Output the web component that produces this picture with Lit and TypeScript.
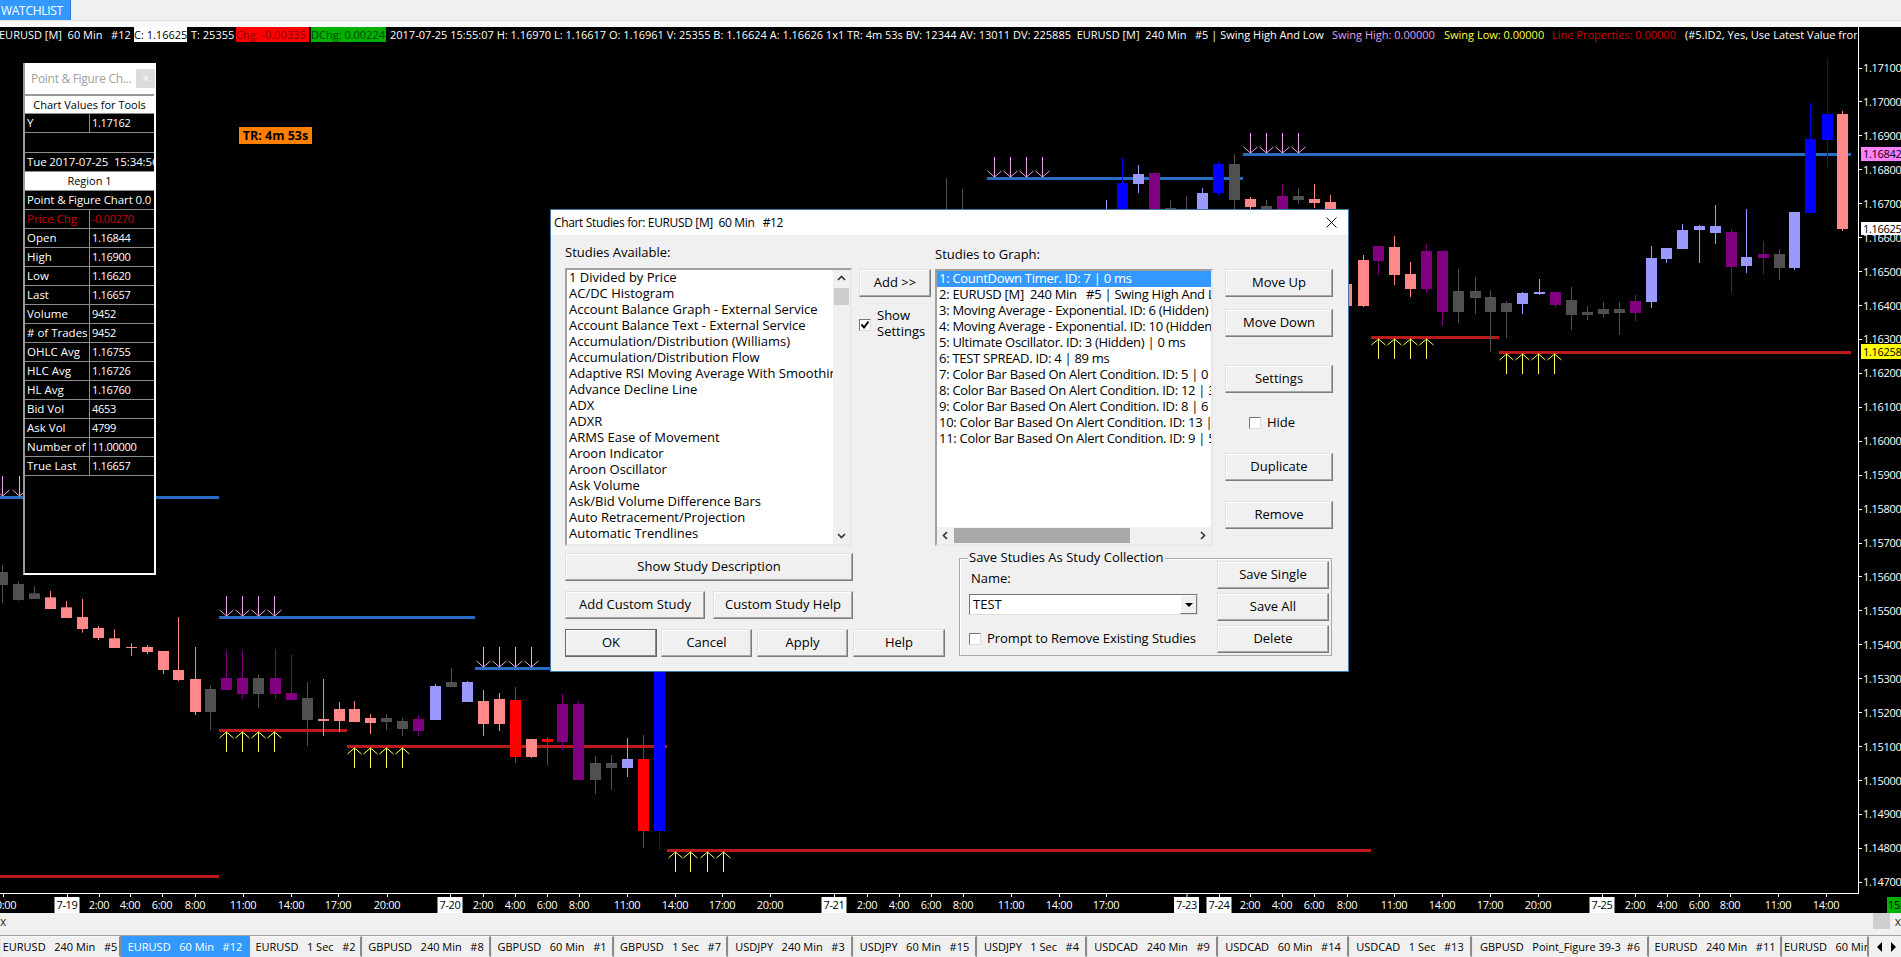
import { LitElement, html, css, svg } from "lit";
import { customElement } from "lit/decorators.js";
import { styleMap } from "lit/directives/style-map.js";

const C: Record<string, string> = { p: "#ff8888", g: "#505050", v: "#800080", b: "#9999ff", r: "#ff0000", u: "#0000ff" };
type K = [number, number, number, number, number, string];

// left part: x and y read from the lower-left crop
const z9: K[] = ([
  [42,5,62,12,60,"g"],[79,18,57,40,57,"g"],[116,33,87,52,87,"p"],[153,63,114,82,114,"p"],[190,57,158,111,147,"p"],
  [227,138,180,144,174,"p"],[264,148,204,175,204,"p"],[301,190,228,201,204,"p"],[338,195,222,201,216,"p"],[375,213,282,213,270,"p"],
  [411,111,303,270,300,"p"],[449,201,405,297,396,"p"],[485,316,450,327,396,"g"],[522,213,330,294,330,"v"],[559,213,357,294,342,"v"],
  [596,285,384,294,342,"g"],[633,207,357,294,342,"v"],[670,225,360,339,360,"v"],[707,306,498,354,420,"g"],[744,297,468,417,423,"p"],
  [781,366,456,387,423,"p"],[817,363,426,387,426,"p"],[854,402,462,414,429,"p"],[891,402,450,414,426,"g"],[928,414,468,423,447,"g"],
  [965,405,468,417,453,"v"],[1002,312,420,318,420,"b"],[1039,264,321,306,321,"g"],[1076,303,366,306,366,"b"],[1113,330,468,363,432,"p"],
  [1150,339,453,357,432,"p"],[1187,321,549,360,531,"r"],[1224,477,534,477,531,"p"],[1261,471,555,477,486,"r"],[1297,342,510,372,486,"v"],
  [1334,363,600,372,600,"v"],[1371,528,642,549,600,"g"],[1408,525,630,549,564,"g"],[1445,474,591,537,564,"b"],[1482,465,804,537,753,"r"],
  [1519,60,810,60,753,"u"],
] as K[]).map(([z, a, b, c, d, k]) => [z / 2.306, 580 + a / 3, 580 + b / 3, 580 + c / 3, 580 + d / 3, k] as K);

const candles: K[] = [
  [2, 565, 603, 572, 585, "g"],
  ...z9,
  [946,178,300,260,300,"g"],[962,189,300,260,300,"g"],[1106,200,300,260,300,"b"],[1122,158,300,183,300,"u"],
  [1138,165,193,174,184,"b"],[1154,172,300,173,300,"v"],[1170,200,300,208,300,"g"],[1186,196,300,260,300,"g"],
  [1202,188,300,193,300,"b"],[1218,162,196,164,193,"u"],[1234,154,300,164,200,"g"],[1250,197,209,199,207,"p"],
  [1266,200,300,206,300,"g"],[1282,184,300,196,300,"v"],[1298,188,204,196,200,"g"],[1314,184,208,199,203,"p"],
  [1330,195,300,202,300,"p"],[1346,284,306,284,306,"p"],
  [1362.5,255,307,260,306,"p"],[1378,246,275,246,261,"v"],[1394,236,285,247,275,"p"],[1410,262,297,274,289,"p"],
  [1426,244,293,251,289,"v"],[1442,250,326,251,312,"v"],[1458,269,323,291,312,"g"],[1474.5,277,314,291,298,"g"],
  [1490,290,352,297,312,"g"],[1506,301,338,303,312,"g"],[1522,292,314,293,304,"b"],[1538.5,279,295,292,294,"b"],
  [1554.7,292,307,292,305,"v"],[1570.8,287,330,300,315,"g"],[1586.5,306,320,312,315,"g"],[1602.6,302,317,309,314,"g"],
  [1618.7,302,335,309,313,"g"],[1634.8,295,321,301,313,"v"],[1650.5,246,308,258,302,"b"],[1666.3,248,263,248,259,"b"],
  [1682.4,224,249,230,249,"b"],[1698.5,225,263,226,230,"b"],[1714.6,205,244,226,233,"b"],[1730.7,229,293,232,267,"v"],
  [1746.4,209,273,257,266,"b"],[1762.5,241,274,254,258,"v"],[1778.6,249,280,254,268,"g"],[1794.4,212,270,212,268,"b"],
  [1810,103,213,139,213,"u"],[1826.5,59,167,114,140,"u"],[1842.4,111,231,114,229,"p"],
];

// swing lines: x1, x2, y, arrow xs, arrow far end
type L = [number, number, number, number[], number];
const blue: L[] = [
  [0, 219, 497, [2, 19], 476],
  [219, 475, 617, [226, 242, 258, 274], 596],
  [475, 552, 668, [483, 499, 515, 531], 647],
  [987, 1243, 178, [994, 1010, 1026, 1042], 157],
  [1243, 1851, 154, [1250, 1266, 1282, 1298], 133],
];
const red: L[] = [
  [0, 219, 876, [], 0],
  [219, 347, 730, [226, 242, 258, 274], 752],
  [347, 667, 746, [354, 370, 386, 402], 768],
  [667, 1371, 850, [675, 690, 707, 723], 872],
  [1371, 1499, 337, [1378, 1394, 1410, 1426], 359],
  [1499, 1851, 352, [1506, 1522, 1538, 1554], 374],
];

const times: [number, string][] = [
  [3,"20:00"],[99,"2:00"],[130,"4:00"],[162,"6:00"],[195,"8:00"],[243,"11:00"],[291,"14:00"],[338,"17:00"],[387,"20:00"],
  [483,"2:00"],[515,"4:00"],[547,"6:00"],[579,"8:00"],[627,"11:00"],[675,"14:00"],[722,"17:00"],[770,"20:00"],
  [867,"2:00"],[899,"4:00"],[931,"6:00"],[963,"8:00"],[1011,"11:00"],[1059,"14:00"],[1106,"17:00"],
  [1250,"2:00"],[1282,"4:00"],[1314,"6:00"],[1347,"8:00"],[1394,"11:00"],[1442,"14:00"],[1490,"17:00"],[1538,"20:00"],
  [1635,"2:00"],[1667,"4:00"],[1699,"6:00"],[1730,"8:00"],[1778,"11:00"],[1826,"14:00"],
];
const dates: [number, string][] = [[67,"7-19"],[450,"7-20"],[834,"7-21"],[1186.5,"7-23"],[1219,"7-24"],[1602,"7-25"]];
const prices = ["1.17100","1.17000","1.16900","1.16800","1.16700","1.16600","1.16500","1.16400","1.16300","1.16200","1.16100","1.16000","1.15900","1.15800","1.15700","1.15600","1.15500","1.15400","1.15300","1.15200","1.15100","1.15000","1.14900","1.14800","1.14700"];
const priceTags: [number, number, string, string][] = [[147, 14, "1.16842", "#ff80ff"], [222, 13, "1.16625", "#ffffff"], [344, 15, "1.16258", "#ffff00"]];

const tabs: [string, number, boolean?][] = [
  ["EURUSD   240 Min   #5", 121],["EURUSD   60 Min   #12", 129, true],["EURUSD   1 Sec   #2", 112],["GBPUSD   240 Min   #8", 129],
  ["GBPUSD   60 Min   #1", 123],["GBPUSD   1 Sec   #7", 114],["USDJPY   240 Min   #3", 125],["USDJPY   60 Min   #15", 124],
  ["USDJPY   1 Sec   #4", 110],["USDCAD   240 Min   #9", 131],["USDCAD   60 Min   #14", 131],["USDCAD   1 Sec   #13", 123],
  ["GBPUSD   Point_Figure 39-3  #6", 177],["EURUSD   240 Min   #11", 133],["EURUSD   60 Min   #16", 87],
];

const available = ["1 Divided by Price","AC/DC Histogram","Account Balance Graph - External Service","Account Balance Text - External Service","Accumulation/Distribution (Williams)","Accumulation/Distribution Flow","Adaptive RSI Moving Average With Smoothing","Advance Decline Line","ADX","ADXR","ARMS Ease of Movement","Aroon Indicator","Aroon Oscillator","Ask Volume","Ask/Bid Volume Difference Bars","Auto Retracement/Projection","Automatic Trendlines","Average Daily Range"];
const graphed = ["1: CountDown Timer. ID: 7 | 0 ms","2: EURUSD [M]  240 Min   #5 | Swing High And Low","3: Moving Average - Exponential. ID: 6 (Hidden) | 0 ms","4: Moving Average - Exponential. ID: 10 (Hidden) | 0 ms","5: Ultimate Oscillator. ID: 3 (Hidden) | 0 ms","6: TEST SPREAD. ID: 4 | 89 ms","7: Color Bar Based On Alert Condition. ID: 5 | 0 ms","8: Color Bar Based On Alert Condition. ID: 12 | 3 ms","9: Color Bar Based On Alert Condition. ID: 8 | 6 ms","10: Color Bar Based On Alert Condition. ID: 13 | 4 ms","11: Color Bar Based On Alert Condition. ID: 9 | 5 ms"];
const values: [string, string, string?][] = [
  ["Price Chg","-0.00270","neg"],["Open","1.16844"],["High","1.16900"],["Low","1.16620"],["Last","1.16657"],["Volume","9452"],["# of Trades","9452"],
  ["OHLC Avg","1.16755"],["HLC Avg","1.16726"],["HL Avg","1.16760"],["Bid Vol","4653"],["Ask Vol","4799"],["Number of Bars","11.00000"],["True Last","1.16657"],
];

const chev = (d: string) => html`<svg class="chev" width="9" height="9" viewBox="0 0 9 9"><path d=${d} fill="none" stroke="#333" stroke-width="1.6"/></svg>`;
const check = (on: boolean) => html`<span class="cb">${on ? html`<svg width="10" height="10" viewBox="0 0 10 10"><path d="M1.5 4.5 L4 7.5 L8.5 1.5" fill="none" stroke="#000" stroke-width="2"/></svg>` : ""}</span>`;

@customElement("app-root")
export class AppRoot extends LitElement {
  static styles = css`
    :host { display: flex; flex-direction: column; width: 1901px; height: 957px; overflow: hidden; background: #f0f0f0;
      font-family: "Open Sans", "Liberation Sans", sans-serif; font-size: 11px; color: #000; }
    * { box-sizing: border-box; }
    .top { height: 20px; background: #f0f0f0; display: flex; }
    .wl { width: 71px; height: 21px; background: #3399ff; color: #fff; font-size: 12px; letter-spacing: -0.3px; line-height: 21px; padding-left: 1px; border-right: 1px solid #2a7fd4; }
    .topline { height: 7px; background: #f9f9f9; border-top: 1px solid #dcdcdc; }
    .chart { position: relative; height: 886px; background: #000; }
    .plot { position: absolute; left: 0; top: 0; display: block; }
    .plot text { font-family: "Open Sans", "Liberation Sans", sans-serif; font-size: 11px; letter-spacing: -0.3px; }
    .status { position: relative; width: 1857px; height: 15px; line-height: 15px; display: grid; color: #fff; white-space: pre;
      grid-template-columns: 134px 53px 49px 73px 2px 75px 946px 112px 108px 133px 1fr; }
    .status > span { overflow: hidden; }
    .first { text-indent: -1px; }
    .cbox { background: #fff; color: #000; }
    .tcell { padding-left: 4px; }
    .chg { background: #ff0000; color: #8a0000; }
    .dchg { background: #00b000; color: #004a00; }
    .main { padding-left: 4px; }
    .sh { color: #e0a0f0; }
    .sl { color: #ffff40; }
    .lp { color: #d00000; }
    .badge { position: absolute; left: 239px; top: 100px; width: 73px; height: 17px; background: #ff8000; color: #000; font-weight: 700;
      font-size: 12.5px; line-height: 17px; text-align: center; }
    .panel { position: absolute; left: 23px; top: 36px; width: 133px; height: 512px; background: #000; color: #fff; display: flex; flex-direction: column;
      border-right: 2px solid #fff; border-bottom: 2px solid #fff; border-left: 2px solid #9a9a9a; }
    .ptitle { height: 31px; background: #fff; color: #a0a0a0; font-size: 12px; letter-spacing: -0.3px; display: flex; align-items: center; justify-content: space-between; padding: 0 0 0 6px; white-space: nowrap; }
    .px { width: 19px; height: 19px; background: #dcdcdc; color: #fff; line-height: 19px; text-align: center; font-size: 12px; margin-right: -1px; }
    .prow { height: 19px; line-height: 18px; border-bottom: 1px solid #8c8c8c; display: flex; white-space: pre; overflow: hidden; }
    .prow.firstrow { height: 20px; border-top: 2px solid #9a9a9a; }
    .prow.w { background: #fff; color: #000; justify-content: center; }
    .prow.blank { height: 20px; }
    .prow .a { width: 65px; flex: none; padding-left: 2px; border-right: 1px solid #8c8c8c; overflow: hidden; font-size: 11.5px; }
    .prow .b { padding-left: 2px; flex: 1; overflow: hidden; letter-spacing: -0.3px; }
    .prow .full { padding-left: 2px; overflow: hidden; font-size: 11.5px; letter-spacing: -0.12px; }
    .prow.neg { color: #d00000; }

    .dlg { position: absolute; left: 550px; top: 182px; width: 799px; height: 463px; background: #f0f0f0; border: 1px solid #3f78a8;
      display: flex; flex-direction: column; font-size: 13px; }
    .dt { height: 25px; flex: none; background: #fff; display: flex; align-items: center; justify-content: space-between; padding: 0 11px 0 3px; white-space: pre; font-size: 12px; letter-spacing: -0.35px; }
    .dbody { padding-left: 14px; display: flex; flex-direction: column; }
    .toprow { display: flex; height: 311px; }
    .cola { width: 287px; }
    .colb { width: 72px; margin-left: 7px; padding-top: 34px; }
    .colc { width: 278px; margin-left: 4px; }
    .cold { width: 108px; margin-left: 12px; padding-top: 34px; display: flex; flex-direction: column; }
    .lab { height: 33px; line-height: 16px; padding-top: 9px; }
    .colc .lab { height: 34px; padding-top: 11px; }
    .list { display: flex; background: #fff; height: 278px; overflow: hidden; border-style: solid; border-width: 2px 2px 2px 2px; border-color: #a0a0a0 #e8e8e8 #e8e8e8 #a0a0a0; }
    .colc .list { height: 277px; flex-direction: column; letter-spacing: -0.28px; }
    .items { flex: 1; min-width: 0; min-height: 0; overflow: hidden; }
    .item { height: 16px; line-height: 15px; padding-left: 2px; white-space: pre; overflow: hidden; }
    .item.sel { background: #3399ff; color: #fff; }
    .vs { width: 17px; flex: none; background: #f0f0f0; display: flex; flex-direction: column; align-items: center; }
    .vs .thumb { width: 15px; height: 17px; background: #cdcdcd; margin-top: 1px; }
    .vs .sp { flex: 1; }
    .hs { height: 17px; flex: none; background: #f0f0f0; display: flex; align-items: center; }
    .hs .thumb { width: 176px; height: 15px; background: #a8a8a8; }
    .hs .sp { flex: 1; }
    .chev { flex: none; margin: 4px; display: block; }
    .btn { display: flex; align-items: center; justify-content: center; height: 28px; flex: none; background: #f0f0f0; white-space: nowrap; padding-bottom: 2px;
      border: 1px solid; border-color: #e0e0e0 #7c7c7c #7c7c7c #e0e0e0; box-shadow: inset -1px -1px 0 #a8a8a8, inset 1px 1px 0 #fff; }
    .btn.def { border-color: #666; box-shadow: inset -1px -1px 0 #8a8a8a, inset 1px 1px 0 #fff; }
    .chk { display: flex; gap: 6px; align-items: center; }
    .chk > span:last-child { position: relative; top: -1px; }
    .cb { width: 12px; height: 12px; flex: none; background: #fff; border: 1px solid; border-color: #777 #ddd #ddd #777; display: flex; align-items: center; justify-content: center; }
    .cb svg { display: block; }
    .show { margin-top: 11px; align-items: flex-start; line-height: 16px; }
    .show .cb { margin-top: 11px; }
    .m12 { margin-top: 12px; }
    .m28 { margin-top: 28px; }
    .m24 { margin-top: 24px; }
    .m20 { margin-top: 20px; }
    .hide { padding-left: 24px; height: 12px; }
    .bottom { display: flex; margin-top: 7px; }
    .bl { width: 380px; display: flex; flex-direction: column; }
    .bl .w288 { width: 288px; }
    .brow { display: flex; margin-top: 10px; }
    .w140 { width: 140px; }
    .g8 { margin-left: 8px; }
    .w92 { width: 92px; }
    .w91 { width: 91px; }
    .g4 { margin-left: 4px; }
    .g5 { margin-left: 5px; }
    .grp { position: relative; width: 373px; height: 98px; margin: 5px 0 0 14px; border: 1px solid #a8a8a8; box-shadow: inset 1px 1px 0 #fff; display: flex; justify-content: space-between; padding: 2px 2px 0 9px; }
    .leg { position: absolute; left: 8px; top: -10px; background: #f0f0f0; padding: 0 1px; line-height: 16px; white-space: nowrap; }
    .gl { width: 229px; padding-top: 9px; }
    .name { line-height: 16px; margin-left: 2px; }
    .combo { margin-top: 8px; height: 21px; display: flex; background: #fff; border: 1px solid; border-color: #777 #ddd #ddd #777; padding-left: 3px; line-height: 18px; justify-content: space-between; }
    .arrow { width: 17px; background: #f0f0f0; border: 1px solid; border-color: #fff #777 #777 #fff; display: flex; align-items: center; justify-content: center; }
    .arrow i { width: 0; height: 0; border-style: solid; border-width: 4px 4px 0 4px; border-color: #000 transparent transparent transparent; }
    .prompt { margin-top: 18px; white-space: nowrap; height: 12px; letter-spacing: -0.08px; }
    .gr { width: 112px; display: flex; flex-direction: column; gap: 4px; }

    .strip { height: 22px; background: #f0f0f0; display: flex; justify-content: space-between; line-height: 18px; color: #333; }
    .sx { padding-left: 0; font-size: 12px; }
    .sr { display: flex; }
    .sq { width: 17px; height: 16px; background: #cfcfcf; }
    .sr .x2 { width: 11px; text-align: right; font-size: 12px; }
    .tabs { height: 22px; display: flex; border-top: 1px solid #a0a0a0; background: #f0f0f0; overflow: hidden; }
    .tab { flex: none; overflow: hidden; white-space: pre; text-align: center; line-height: 19px; padding: 0 1px;
      border: 1px solid; border-color: #f8f8f8 #8a8a8a #f0f0f0 #e8e8e8; border-right-width: 2px; }
    .tab.on { background: #3399ff; color: #fff; border-color: #3399ff; margin-top: -1px; height: 23px; line-height: 21px; }
    .nav { flex: 1; display: flex; align-items: center; justify-content: space-around; padding-left: 3px; }
    .nav i { width: 0; height: 0; border-style: solid; border-width: 5px 0; border-color: transparent #000; }
    .nav i.l { border-right-width: 5px; border-left-width: 0; }
    .nav i.r { border-left-width: 5px; border-right-width: 0; }
  `;

  private plot() {
    return html`<svg class="plot" width="1901" height="886" viewBox="0 27 1901 886">
      ${[...blue.map((l) => this.line(l, "#2a6cc4", "#e8a4e8", -1)), ...red.map((l) => this.line(l, "#bb1a1a", "#ffff66", 1))]}
      ${candles.map(([x, wt, wb, bt, bb, k]) => {
        const cx = Math.round(x);
        return svg`<rect x=${cx} y=${wt} width="1" height=${wb - wt} fill=${C[k]}/><rect x=${cx - 5} y=${bt} width="11" height=${bb - bt} fill=${C[k]}/>`;
      })}
      <rect x="1858" y="27" width="1" height="867" fill="#fff"/>
      <rect x="0" y="893" width="1859" height="1" fill="#fff"/>
      ${prices.map((p, i) => {
        const y = 67.5 + i * 33.93;
        return svg`<rect x="1858" y=${Math.round(y)} width="4" height="1" fill="#fff"/><text x="1863" y=${y + 4.5} fill="#fff">${p}</text>`;
      })}
      ${priceTags.map(([y, h, t, bg]) => svg`<rect x="1861" y=${y} width="40" height=${h} fill=${bg}/><text x="1863" y=${y + h / 2 + 4} fill="#000">${t}</text>`)}
      ${times.map(([x, t]) => svg`<rect x=${x} y="893" width="1" height="4" fill="#fff"/><text x=${x} y="909" text-anchor="middle" fill="#fff">${t}</text>`)}
      ${dates.map(([x, t]) => svg`<rect x=${x} y="893" width="1" height="4" fill="#fff"/><rect x=${x - 12.5} y="897" width="25" height="16" fill="#fff"/><text x=${x} y="909" text-anchor="middle" fill="#000">${t}</text>`)}
      <rect x="1887" y="897" width="14" height="16" fill="#00b000"/><text x="1888" y="909" fill="#000">15:55:07</text>
    </svg>`;
  }

  private line([x1, x2, y, xs, end]: L, col: string, acol: string, dir: number) {
    const tip = dir < 0 ? y - 1 : y + 2;
    const wing = tip + dir * 6;
    return svg`<rect x=${x1} y=${y - 1} width=${x2 - x1} height="3" fill=${col}/>
      ${xs.map((x) => svg`<path d="M${x + 0.5} ${end} L${x + 0.5} ${tip} M${x - 6.5} ${wing} L${x + 0.5} ${tip} L${x + 7.5} ${wing}" fill="none" stroke=${acol} stroke-width="1"/>`)}`;
  }

  render() {
    return html`
      <div class="top"><div class="wl">WATCHLIST</div></div>
      <div class="topline"></div>
      <div class="chart">
        ${this.plot()}
        <div class="status">
          <span class="first">EURUSD [M]  60 Min   #12</span>
          <span class="cbox">C: 1.16625</span>
          <span class="tcell">T: 25355</span>
          <span class="chg">Chg: -0.00335</span>
          <span></span>
          <span class="dchg">DChg: 0.00224</span>
          <span class="main">2017-07-25 15:55:07 H: 1.16970 L: 1.16617 O: 1.16961 V: 25355 B: 1.16624 A: 1.16626 1x1 TR: 4m 53s BV: 12344 AV: 13011 DV: 225885  EURUSD [M]  240 Min   #5 | Swing High And Low</span>
          <span class="sh">Swing High: 0.00000</span>
          <span class="sl">Swing Low: 0.00000</span>
          <span class="lp">Line Properties: 0.00000</span>
          <span>(#5.ID2, Yes, Use Latest Value from Reference)</span>
        </div>
        <div class="badge">TR: 4m 53s</div>
        <div class="panel">
          <div class="ptitle"><span>Point &amp; Figure Ch...</span><span class="px">×</span></div>
          <div class="prow w firstrow">Chart Values for Tools</div>
          <div class="prow"><span class="a">Y</span><span class="b">1.17162</span></div>
          <div class="prow blank"></div>
          <div class="prow"><span class="full">Tue 2017-07-25  15:34:56</span></div>
          <div class="prow w">Region 1</div>
          <div class="prow"><span class="full">Point &amp; Figure Chart 0.0</span></div>
          ${values.map(([a, b, c]) => html`<div class="prow ${c ?? ""}"><span class="a">${a}</span><span class="b">${b}</span></div>`)}
        </div>
        <div class="dlg">
          <div class="dt"><span>Chart Studies for: EURUSD [M]  60 Min   #12</span>
            <svg width="11" height="11" viewBox="0 0 11 11"><path d="M0.5 0.5 L10.5 10.5 M10.5 0.5 L0.5 10.5" stroke="#111" stroke-width="1"/></svg></div>
          <div class="dbody">
            <div class="toprow">
              <div class="cola">
                <div class="lab">Studies Available:</div>
                <div class="list">
                  <div class="items">${available.map((s) => html`<div class="item">${s}</div>`)}</div>
                  <div class="vs">${chev("M1 6 L4.5 2.5 L8 6")}<div class="thumb"></div><div class="sp"></div>${chev("M1 3 L4.5 6.5 L8 3")}</div>
                </div>
              </div>
              <div class="colb">
                <div class="btn">Add &gt;&gt;</div>
                <div class="chk show">${check(true)}<span>Show<br />Settings</span></div>
              </div>
              <div class="colc">
                <div class="lab">Studies to Graph:</div>
                <div class="list">
                  <div class="items">${graphed.map((s, i) => html`<div class="item ${i === 0 ? "sel" : ""}">${s}</div>`)}</div>
                  <div class="hs">${chev("M6 1 L2.5 4.5 L6 8")}<div class="thumb"></div><div class="sp"></div>${chev("M3 1 L6.5 4.5 L3 8")}</div>
                </div>
              </div>
              <div class="cold">
                <div class="btn">Move Up</div>
                <div class="btn m12">Move Down</div>
                <div class="btn m28">Settings</div>
                <div class="chk hide m24">${check(false)}<span>Hide</span></div>
                <div class="btn m24">Duplicate</div>
                <div class="btn m20">Remove</div>
              </div>
            </div>
            <div class="bottom">
              <div class="bl">
                <div class="btn w288">Show Study Description</div>
                <div class="brow"><div class="btn w140">Add Custom Study</div><div class="btn w140 g8">Custom Study Help</div></div>
                <div class="brow">
                  <div class="btn def w92">OK</div><div class="btn w91 g4">Cancel</div><div class="btn w91 g5">Apply</div><div class="btn w92 g5">Help</div>
                </div>
              </div>
              <div class="grp">
                <div class="leg">Save Studies As Study Collection</div>
                <div class="gl">
                  <div class="name">Name:</div>
                  <div class="combo"><span>TEST</span><span class="arrow"><i></i></span></div>
                  <div class="chk prompt">${check(false)}<span>Prompt to Remove Existing Studies</span></div>
                </div>
                <div class="gr"><div class="btn">Save Single</div><div class="btn">Save All</div><div class="btn">Delete</div></div>
              </div>
            </div>
          </div>
        </div>
      </div>
      <div class="strip"><span class="sx">x</span><span class="sr"><span class="sq"></span><span class="x2">x</span></span></div>
      <div class="tabs">
        ${tabs.map(([t, w, on]) => html`<div class="tab ${on ? "on" : ""}" style=${styleMap({ width: `${w}px` })}>${t}</div>`)}
        <div class="nav"><i class="l"></i><i class="r"></i></div>
      </div>
    `;
  }
}
